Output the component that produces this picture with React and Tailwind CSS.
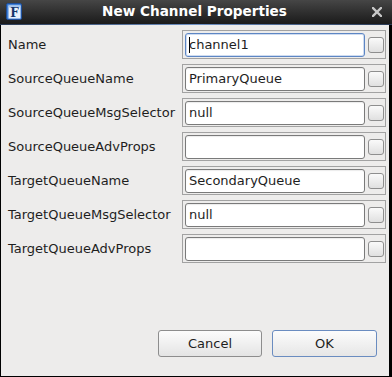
export default function App() {
  const rows = [
    ["Name", "channel1", true],
    ["SourceQueueName", "PrimaryQueue"],
    ["SourceQueueMsgSelector", "null"],
    ["SourceQueueAdvProps", ""],
    ["TargetQueueName", "SecondaryQueue"],
    ["TargetQueueMsgSelector", "null"],
    ["TargetQueueAdvProps", ""],
  ];
  return (
    <div className="w-[392px] h-[377px] bg-black flex flex-col font-['DejaVu_Sans',sans-serif] text-[13px] text-[#1e1e1e]">
      <div className="h-[24px] bg-gradient-to-b from-[#464646] to-[#1b1b1b] flex items-center pl-[6px] pr-[10px] shrink-0">
        <svg width="17" height="18" viewBox="0 0 17 18" className="shrink-0">
          <rect x="0.5" y="0.5" width="15" height="16" rx="1.5" fill="#3f7fd6" stroke="#1f4f9a" />
          <rect x="2.5" y="2.5" width="12" height="13" fill="#e9f1fb" />
          <rect x="2.5" y="2.5" width="12" height="2" fill="#a9c6ec" />
          <text x="8.5" y="14" textAnchor="middle" fontSize="12" fontWeight="bold" fontFamily="DejaVu Serif, serif" fill="#17356b">F</text>
        </svg>
        <div className="flex-1 text-center text-white font-bold text-[13.6px] pr-[6px] leading-none">New Channel Properties</div>
        <svg width="10" height="10" viewBox="0 0 10 10" className="shrink-0">
          <path d="M1 1L9 9M9 1L1 9" stroke="#c8c8c8" strokeWidth="2.4" strokeLinecap="square" />
        </svg>
      </div>
      <div className="h-[1px] bg-gradient-to-r from-[#2a3a55] via-[#6f92c6] to-[#2a3a55] shrink-0" />
      <div className="flex-1 bg-[#edeceb] ml-[1px] mr-[3px] mb-[1px] flex flex-col pt-[5px]">
        <div className="flex flex-col gap-[5px]">
          {rows.map(([label, value, focused]) => (
            <div key={label} className="flex items-center h-[29px]">
              <div className="w-[181px] pl-[7px] whitespace-nowrap">{label}</div>
              <div className="w-[204px] h-[29px] border border-[#a2a2a2] flex items-center pl-[2px] gap-[3px]">
                <div
                  className={
                    focused
                      ? "relative w-[180px] h-[24px] rounded-[3px] border border-[#5d86c4] bg-white flex items-center pl-[3px] shadow-[inset_0_0_0_1px_#cfdcf0]"
                      : "relative w-[180px] h-[24px] rounded-[3px] border border-[#7a7a7a] bg-white flex items-center pl-[3px] shadow-[inset_0_1px_1px_rgba(0,0,0,0.08)]"
                  }
                >
                  {focused && <div className="w-[1px] h-[16px] bg-black mr-[-1px]" />}
                  <span className="whitespace-nowrap">{value}</span>
                </div>
                <div className="w-[16px] h-[16px] rounded-[3px] border border-[#8e8e8e] bg-gradient-to-b from-[#fafafa] to-[#e0e0e0]" />
              </div>
            </div>
          ))}
        </div>
        <div className="mt-auto flex justify-end gap-[10px] pr-[12px] pb-[19px]">
          <div className="w-[104px] h-[27px] rounded-[3px] border border-[#8d8d8d] bg-gradient-to-b from-[#fcfcfc] to-[#e4e4e4] flex items-center justify-center">Cancel</div>
          <div className="w-[105px] h-[27px] rounded-[3px] border border-[#6a8cc0] bg-gradient-to-b from-[#fcfcfc] to-[#e6e6e6] flex items-center justify-center">OK</div>
        </div>
      </div>
    </div>
  );
}
